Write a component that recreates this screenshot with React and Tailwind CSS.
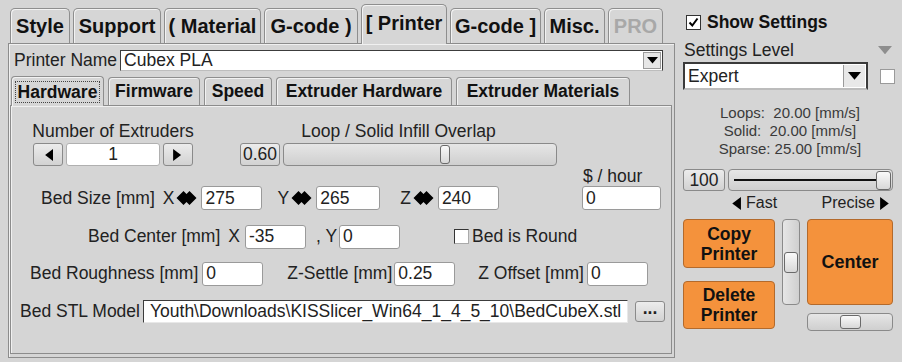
import React from 'react';

function LeftRight() {
  return (
    <svg width="21" height="14" viewBox="0 0 20 14" className="ml-[2px] shrink-0">
      <path d="M0 7 L7 0 L10 3 L13 0 L20 7 L13 14 L10 11 L7 14 Z" fill="#000" />
    </svg>
  );
}

function Tri({ dir = 'left', size = 10, color = '#000' }) {
  const pts = {
    left: '10,0 10,12 2,6',
    right: '0,0 0,12 8,6',
    down: '0,0 12,0 6,7',
  };
  const vb = dir === 'down' ? '0 0 12 7' : '0 0 10 12';
  const w = dir === 'down' ? size : size * 0.85;
  const h = dir === 'down' ? size * 0.6 : size;
  return (
    <svg width={w} height={h} viewBox={vb} className="shrink-0">
      <polygon points={pts[dir]} fill={color} />
    </svg>
  );
}

function Tab({ label, w, selected, disabled }) {
  return (
    <div
      className={
        'flex items-center justify-center rounded-t-[5px] border border-b-0 border-[#8e8e8e] bg-[#d6d6d6] shadow-[inset_1px_1px_0_#f2f2f2] text-[20px] font-bold ' +
        (selected ? 'relative z-10 -mb-px h-[40px] pb-[3px]' : 'h-[35px]') +
        (disabled ? ' text-[#a8a8a8]' : ' text-[#111]')
      }
      style={{ width: w }}
    >
      {label}
    </div>
  );
}

function SubTab({ label, w, selected }) {
  return (
    <div
      className={
        'flex items-center justify-center rounded-t-[4px] border border-b-0 border-[#8e8e8e] bg-[#d6d6d6] shadow-[inset_1px_1px_0_#f2f2f2] text-[17.5px] font-bold text-[#111] ' +
        (selected ? 'relative z-10 -mb-px h-[30px]' : 'h-[28px]')
      }
      style={{ width: w }}
    >
      {selected ? (
        <span className="border border-dotted border-[#444] px-[2px] leading-[20px]">{label}</span>
      ) : (
        label
      )}
    </div>
  );
}

function Field({ value, w, className = '' }) {
  return (
    <div
      className={
        'flex h-[24px] items-center rounded-[3px] border border-[#9a9a9a] bg-white pl-[3px] text-[17.5px] text-[#222] ' +
        className
      }
      style={{ width: w }}
    >
      {value}
    </div>
  );
}

function Btn({ children, className = '' }) {
  return (
    <div
      className={
        'flex items-center justify-center rounded-[3px] border border-[#8a8a8a] bg-gradient-to-b from-[#ececec] to-[#d2d2d2] text-[17.5px] text-[#222] ' +
        className
      }
    >
      {children}
    </div>
  );
}

function Thumb({ className = '' }) {
  return (
    <div
      className={
        'rounded-[3px] border border-[#6a6a6a] bg-gradient-to-b from-[#fafafa] to-[#d8d8d8] ' + className
      }
    />
  );
}

export default function App() {
  const tabs = [
    ['Style', 60],
    ['Support', 88],
    ['( Material', 97],
    ['G-code )', 94],
    ['[ Printer', 86, true],
    ['G-code ]', 91],
    ['Misc.', 61],
    ['PRO', 55, false, true],
  ];
  const subTabs = [
    ['Hardware', 93, true],
    ['Firmware', 92],
    ['Speed', 68],
    ['Extruder Hardware', 176],
    ['Extruder Materials', 174],
  ];

  return (
    <div className="flex h-[362px] w-[902px] overflow-hidden bg-[#d5d5d5] font-['Liberation_Sans',Arial,sans-serif] text-[#222]">
      {/* left: settings tabs */}
      <div className="w-[678px] shrink-0 pl-[8px]">
        <div className="flex h-[43px] items-end gap-[3px] pl-[2px]">
          {tabs.map(([l, w, s, d]) => (
            <Tab key={l} label={l} w={w} selected={s} disabled={d} />
          ))}
        </div>
        <div className="h-[315px] w-[667px] border border-[#8c8c8c] shadow-[inset_1px_1px_0_#f0f0f0]">
          <div className="flex items-center pt-[6px]">
            <span className="ml-[5px] text-[17.5px] leading-[21px]">Printer Name</span>
            <div className="ml-[3px] mr-[11px] flex h-[21px] flex-1 items-center border border-t-[#3c3c3c] border-l-[#3c3c3c] border-b-[#bdbdbd] border-r-[#3c3c3c] bg-white pl-[3px] text-[17.5px]">
              <span className="flex-1">Cubex PLA</span>
              <div className="mr-[1px] flex h-[17px] w-[18px] items-center justify-center border border-[#9a9a9a] bg-[#e6e6e6]">
                <Tri dir="down" size={11} />
              </div>
            </div>
          </div>

          <div className="ml-[2px] mt-[5px] flex h-[29px] items-end gap-[4px]">
            {subTabs.map(([l, w, s]) => (
              <SubTab key={l} label={l} w={w} selected={s} />
            ))}
          </div>

          <div className="ml-[1px] h-[249px] w-[662px] border border-[#8c8c8c] shadow-[inset_1px_1px_0_#f0f0f0] text-[17.5px]">
            {/* extruders + overlap */}
            <div className="mt-[15px] flex">
              <div className="ml-[22px] flex w-[160px] flex-col items-center">
                <span className="whitespace-nowrap leading-[20px]">Number of Extruders</span>
                <div className="mt-[2px] flex h-[23px]">
                  <Btn className="w-[30px]">
                    <Tri dir="left" size={12} />
                  </Btn>
                  <div className="ml-[3px] flex w-[94px] items-center justify-center rounded-[3px] border border-[#b0b0b0] bg-white">
                    1
                  </div>
                  <Btn className="ml-[3px] w-[30px]">
                    <Tri dir="right" size={12} />
                  </Btn>
                </div>
              </div>
              <div className="ml-[47px] flex w-[317px] flex-col items-center">
                <span className="leading-[20px]">Loop / Solid Infill Overlap</span>
                <div className="mt-[2px] flex h-[23px] w-full">
                  <Btn className="w-[40px]">0.60</Btn>
                  <div className="ml-[3px] flex flex-1 items-center rounded-[4px] border border-[#8a8a8a] bg-gradient-to-b from-[#e6e6e6] to-[#cfcfcf] pl-[156px]">
                    <Thumb className="h-[19px] w-[10px]" />
                  </div>
                </div>
              </div>
            </div>

            <div className="ml-[572px] leading-[20px]">$ / hour</div>

            {/* bed size */}
            <div className="flex h-[24px] items-center">
              <span className="ml-[30px]">Bed Size [mm]</span>
              <span className="ml-[8px]">X</span>
              <LeftRight />
              <Field value="275" w={61} className="ml-[4px]" />
              <span className="ml-[15px]">Y</span>
              <LeftRight />
              <Field value="265" w={64} className="ml-[4px]" />
              <span className="ml-[20px]">Z</span>
              <LeftRight />
              <Field value="240" w={61} className="ml-[4px]" />
              <Field value="0" w={79} className="ml-[83px]" />
            </div>

            {/* bed center */}
            <div className="mt-[15px] flex h-[23px] items-center">
              <span className="ml-[77px]">Bed Center [mm]</span>
              <span className="ml-[8px]">X</span>
              <Field value="-35" w={61} className="ml-[5px] h-[23px]" />
              <span className="ml-[10px]">, Y</span>
              <Field value="0" w={61} className="ml-[2px] h-[23px]" />
              <div className="ml-[54px] h-[15px] w-[15px] border border-t-[#333] border-l-[#333] border-b-[#aaa] border-r-[#aaa] bg-white" />
              <span className="ml-[3px]">Bed is Round</span>
            </div>

            {/* roughness */}
            <div className="mt-[14px] flex h-[23px] items-center">
              <span className="ml-[19px]">Bed Roughness [mm]</span>
              <Field value="0" w={61} className="ml-[4px] h-[23px]" />
              <span className="ml-[24px]">Z-Settle [mm]</span>
              <Field value="0.25" w={61} className="ml-[2px] h-[23px]" />
              <span className="ml-[23px]">Z Offset [mm]</span>
              <Field value="0" w={61} className="ml-[3px] h-[23px]" />
            </div>

            {/* stl */}
            <div className="mt-[15px] flex h-[23px] items-center">
              <span className="ml-[9px]">Bed STL Model</span>
              <div className="ml-[3px] flex h-[23px] w-[485px] items-center overflow-hidden whitespace-nowrap border border-t-[#3c3c3c] border-l-[#3c3c3c] border-b-[#e8e8e8] border-r-[#e8e8e8] bg-white pl-[6px] text-[17.5px]">
                Youth\Downloads\KISSlicer_Win64_1_4_5_10\BedCubeX.stl
              </div>
              <Btn className="ml-[7px] h-[21px] w-[30px] pb-[6px] font-bold">...</Btn>
            </div>
          </div>
        </div>
      </div>

      {/* right: settings level & actions */}
      <div className="w-[224px] shrink-0">
        <div className="flex items-center pl-[8px] pt-[12px] leading-[20px]">
          <div className="flex h-[15px] w-[15px] items-center justify-center border border-[#333] bg-white">
            <svg width="11" height="11" viewBox="0 0 11 11">
              <path d="M1.5 5.5 L4.3 8.5 L9.5 1.5" stroke="#000" strokeWidth="2" fill="none" />
            </svg>
          </div>
          <span className="ml-[6px] text-[17.5px] font-bold text-[#111]">Show Settings</span>
        </div>
        <div className="mt-[8px] flex items-center justify-between pl-[6px] pr-[10px] leading-[20px]">
          <span className="text-[17.5px]">Settings Level</span>
          <Tri dir="down" size={14} color="#8e8e8e" />
        </div>
        <div className="mt-[2px] flex items-center">
          <div className="ml-[5px] flex h-[28px] w-[185px] items-center border-2 border-t-[#3a3a3a] border-l-[#3a3a3a] border-b-[#bcbcbc] border-r-[#3a3a3a] bg-white pl-[3px] text-[17.5px]">
            <span className="flex-1">Expert</span>
            <div className="mr-[1px] flex h-[22px] w-[22px] items-center justify-center border-l border-[#9a9a9a] bg-[#e8e8e8]">
              <Tri dir="down" size={13} />
            </div>
          </div>
          <div className="ml-[12px] h-[15px] w-[15px] border border-[#9a9a9a] bg-white" />
        </div>

        <div className="mt-[14px] text-center text-[15px] leading-[18px] text-[#3a3a3a]">
          <div>Loops:&nbsp; 20.00 [mm/s]</div>
          <div>Solid:&nbsp; 20.00 [mm/s]</div>
          <div>Sparse: 25.00 [mm/s]</div>
        </div>

        <div className="mt-[11px] flex h-[22px] pl-[5px]">
          <Btn className="w-[42px]">100</Btn>
          <div className="relative ml-[3px] flex w-[165px] items-center rounded-[4px] border border-[#8a8a8a] bg-gradient-to-b from-[#e6e6e6] to-[#cfcfcf] pl-[5px] pr-[1px]">
            <div className="h-[2px] flex-1 bg-[#111]" />
            <Thumb className="h-[19px] w-[15px]" />
          </div>
        </div>

        <div className="mt-[3px] flex items-center justify-between pl-[52px] pr-[11px] text-[16px] leading-[18px]">
          <span className="flex items-center gap-[5px]">
            <Tri dir="left" size={13} />
            Fast
          </span>
          <span className="flex items-center gap-[5px]">
            Precise
            <Tri dir="right" size={13} />
          </span>
        </div>

        <div className="mt-[7px] flex pl-[5px]">
          <div className="flex w-[92px] flex-col gap-[13px]">
            <div className="flex h-[49px] items-center justify-center rounded-[4px] border border-[#b36a2c] bg-[#f4923c] text-center text-[17.5px] font-bold leading-[20px] text-[#111]">
              Copy
              <br />
              Printer
            </div>
            <div className="flex h-[48px] items-center justify-center rounded-[4px] border border-[#b36a2c] bg-[#f4923c] text-center text-[17.5px] font-bold leading-[20px] text-[#111]">
              Delete
              <br />
              Printer
            </div>
          </div>
          <div className="ml-[7px] flex h-[86px] w-[18px] items-center justify-center rounded-[4px] border border-[#8a8a8a] bg-gradient-to-r from-[#e6e6e6] to-[#cfcfcf]">
            <Thumb className="h-[21px] w-[14px]" />
          </div>
          <div className="ml-[7px] flex w-[86px] flex-col">
            <div className="flex h-[86px] items-center justify-center rounded-[4px] border border-[#b36a2c] bg-[#f4923c] text-[18px] font-bold text-[#111]">
              Center
            </div>
            <div className="mt-[8px] flex h-[18px] items-center justify-center rounded-[4px] border border-[#8a8a8a] bg-gradient-to-b from-[#e6e6e6] to-[#cfcfcf]">
              <Thumb className="h-[14px] w-[21px]" />
            </div>
          </div>
        </div>
      </div>
    </div>
  );
}
